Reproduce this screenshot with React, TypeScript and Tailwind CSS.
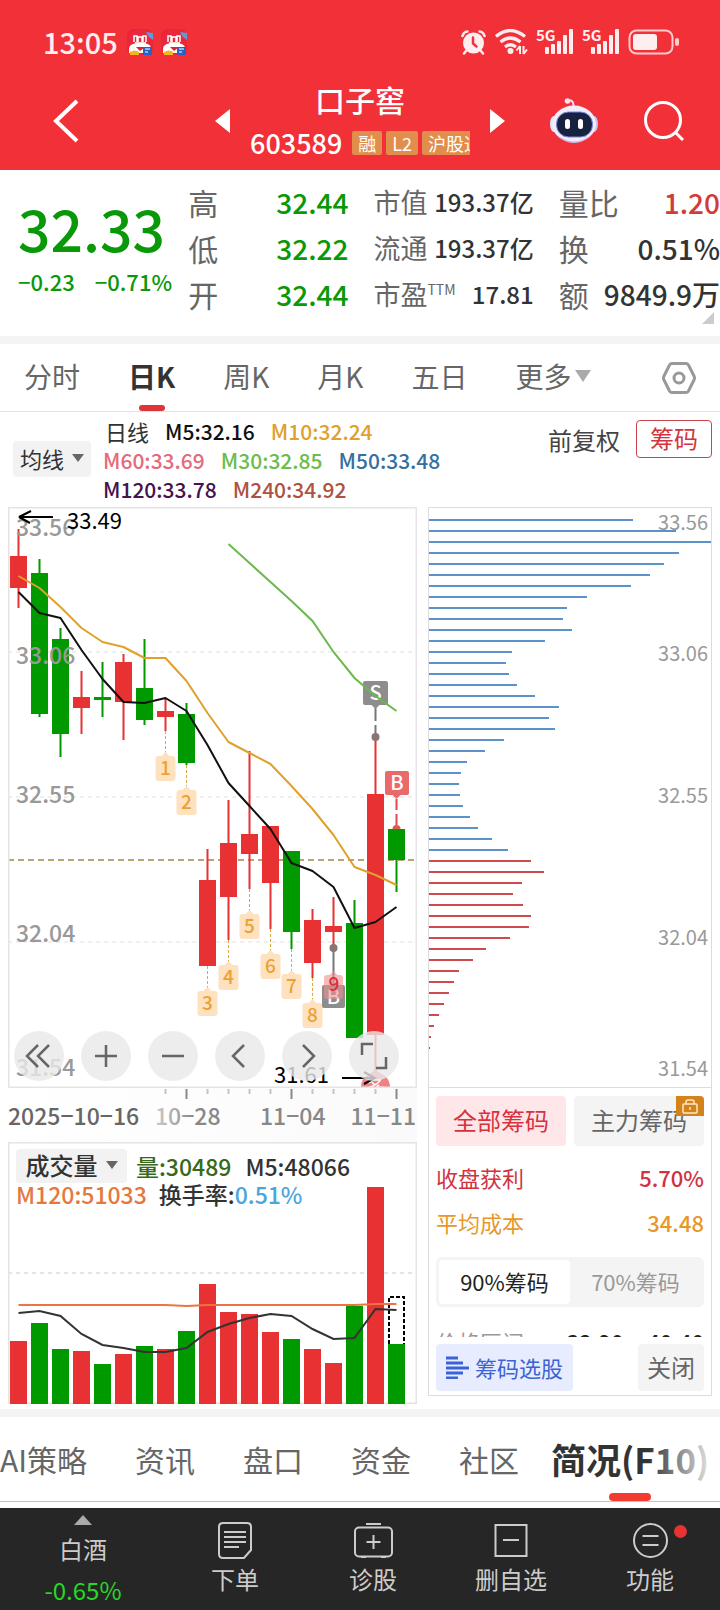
const RED = "#e73132";
const GREEN = "#009900";

// [up, high, body top, body bottom, low] in chart pixels
const candles: [boolean, number, number, number, number][] = [
  [true, 22, 49, 81, 101],
  [false, 52, 66, 207, 210],
  [false, 121, 132, 227, 250],
  [true, 164, 190, 201, 227],
  [false, 155, 190, 193, 210],
  [true, 147, 155, 195, 233],
  [false, 132, 181, 213, 218],
  [true, 192, 204, 210, 224],
  [false, 196, 207, 256, 258],
  [true, 342, 373, 459, 459],
  [true, 293, 336, 390, 433],
  [true, 244, 327, 347, 382],
  [true, 319, 319, 376, 422],
  [false, 344, 344, 425, 442],
  [true, 402, 413, 456, 471],
  [true, 390, 419, 425, 441],
  [false, 393, 416, 531, 531],
  [true, 230, 287, 528, 565],
  [false, 322, 322, 353, 385],
];

const ma5 = [85, 106, 111, 143, 172, 195, 196, 191, 204, 238, 276, 299, 322, 356, 364, 380, 421, 415, 400];
const ma10 = [69, 81, 100, 121, 135, 140, 151, 151, 174, 206, 235, 246, 257, 279, 302, 328, 360, 368, 378];
const ma30 = [37, 56, 75, 94, 114, 145, 171, 189, 204];

const volumeTops = [199, 181, 207, 209, 222, 212, 204, 207, 189, 142, 170, 172, 190, 197, 207, 221, 164, 45, 202];
const volumeMa5 = [171, 169, 174, 192, 203, 206, 210, 210, 206, 190, 182, 176, 172, 174, 187, 197, 196, 167, 168];
const volumeMa120 = [163, 163, 163, 163, 163, 163, 163, 163, 164, 163, 163, 163, 163, 163, 163, 163, 163, 162, 162];

const chips = [
  204, 247, 282, 250, 235, 221, 202, 158, 138, 134, 143, 116, 83, 77, 80, 88, 106, 130, 120, 126, 75, 56, 38, 32, 30,
  31, 34, 41, 49, 63, 79, 102, 115, 93, 84, 94, 102, 100, 81, 57, 44, 30, 25, 20, 15, 10, 5, 2, 1,
];
const FIRST_PROFIT_CHIP = 31;

const cx = (i: number) => 10.5 + i * 21;
const points = (ys: number[], start = 0) => ys.map((y, i) => `${cx(i + start)},${y}`).join(" ");

function StickerIcon() {
  return (
    <svg viewBox="0 0 28 28" className="h-7 w-7">
      <rect x="1" y="1" width="26" height="26" rx="7" fill="#f0222c" />
      <path d="M1 18q-1-14 10-17h8q9 4 8 16z" fill="#e8283f" />
      <path d="M20 4l7 1v7l-4-3z" fill="#5f9bd8" />
      <path d="M8 14V8h3v6M12 14V9h4v5M17 14V8h3v6" fill="none" stroke="#fff" strokeWidth="1.500" />
      <path d="M9 14h11v4H9z" fill="#f7d9c4" />
      <path d="M3 20q1-5 11-5 11 0 11 5v5H3z" fill="#fff" />
      <path d="M10 19l4 4 5-4z" fill="#d9252b" />
      <path d="M4 24q5-3 9 0v3H4z" fill="#f6b51d" />
      <rect x="17" y="19" width="9" height="8" fill="#2a62c4" />
      <path d="M19 21h5M19 24h3" stroke="#fff" strokeWidth="1" />
    </svg>
  );
}

function AlarmIcon() {
  return (
    <svg viewBox="0 0 25 25" className="h-[25px] w-[25px]" fill="none" stroke="#ffeef0" strokeLinecap="round">
      <circle cx="12.500" cy="13" r="10.500" fill="#ffeef0" stroke="none" />
      <path d="M1.500 6q1-4 5-4.500M23.500 6q-1-4-5-4.500M5 21l-2 2.500M20 21l2 2.500" strokeWidth="2.500" />
      <path d="M12 7.500v6l3.500 3" stroke="#f23038" strokeWidth="2.500" />
    </svg>
  );
}

function WifiIcon() {
  return (
    <svg viewBox="0 0 34 26" className="h-[26px] w-[34px]" fill="none" stroke="#ffeef0" strokeWidth="3.200">
      <path d="M2 7.500q14-12 29 0M6.500 13q10-8 20 0M11 18q5.500-4.500 11 0" />
      <circle cx="16.500" cy="22" r="3" fill="#ffeef0" stroke="none" />
      <path d="M26 17v8M22.500 21.500l3.500-4.500M29.500 17v8M33 20.500l-3.500 4.500" strokeWidth="2" />
    </svg>
  );
}

function SignalIcon() {
  return (
    <svg viewBox="0 0 38 26" className="h-[26px] w-[38px] overflow-visible" fill="#ffeef0">
      <text x="0" y="12" fontSize="15" fontWeight="700">
        5G
      </text>
      <rect x="9" y="18" width="4" height="7" rx="1" />
      <rect x="15" y="15" width="4" height="10" rx="1" />
      <rect x="21" y="12" width="4" height="13" rx="1" />
      <rect x="27" y="6" width="4" height="19" rx="1" />
      <rect x="33" y="0" width="4" height="25" rx="1" />
    </svg>
  );
}

function BatteryIcon() {
  return (
    <svg viewBox="0 0 52 26" className="h-[26px] w-[52px]">
      <rect x="1.500" y="1.500" width="43" height="23" rx="7" fill="none" stroke="#ffc9cd" strokeWidth="2" />
      <rect x="5" y="5" width="24" height="16" rx="3" fill="#ffeef0" />
      <rect x="47" y="9" width="4" height="8" rx="2" fill="#ffc9cd" />
    </svg>
  );
}

function RobotIcon() {
  return (
    <svg viewBox="0 0 48 46" className="h-[46px] w-12">
      <path d="M23 10q2-6-3-8" fill="none" stroke="#f3dcf0" strokeWidth="2" />
      <circle cx="17.500" cy="3" r="2.800" fill="#fbe3ec" />
      <ellipse cx="4" cy="26" rx="4" ry="8" fill="#dfe3fb" />
      <ellipse cx="44" cy="26" rx="4" ry="8" fill="#c9c2f5" />
      <ellipse cx="24" cy="26" rx="22" ry="18.500" fill="#f0eefd" />
      <path d="M6 36q18 15 36 0-8 9-18 9T6 36z" fill="#c9b6ee" />
      <rect x="6.500" y="14" width="36" height="25" rx="12" fill="#17223f" stroke="#7d86dd" strokeWidth="1" />
      <rect x="15" y="21" width="5" height="10" rx="2.500" fill="#fff" />
      <rect x="28" y="21" width="5" height="10" rx="2.500" fill="#fff" />
    </svg>
  );
}

function Header() {
  return (
    <header className="bg-[#f23038] text-white">
      <div className="flex h-14 items-end justify-between pr-10 pl-[43px]">
        <div className="flex h-7 items-center gap-[6px]">
          <span className="mr-[2px] pb-[2px] text-[29px] leading-7 font-medium text-[#ffeef0]">13:05</span>
          <StickerIcon />
          <StickerIcon />
        </div>
        <div className="flex h-7 items-center gap-2">
          <AlarmIcon />
          <WifiIcon />
          <SignalIcon />
          <SignalIcon />
          <BatteryIcon />
        </div>
      </div>
      <div className="mt-4 grid h-[98px] grid-cols-[200fr_320fr_200fr] items-center">
        <button aria-label="返回" className="ml-[53px] w-fit">
          <svg viewBox="0 0 26 44" className="h-11 w-[26px]" fill="none" stroke="#fff" strokeWidth="4">
            <path d="M24 2L3 22l21 20" />
          </svg>
        </button>
        <div className="flex items-center justify-between px-[15px]">
          <button aria-label="上一只">
            <svg viewBox="0 0 15 24" className="h-6 w-[15px]" fill="#fff">
              <path d="M15 0v24L0 12z" />
            </svg>
          </button>
          <div className="w-[220px]">
            <h1 className="-mt-1 text-center text-[30px] leading-9 font-medium">口子窖</h1>
            <div className="mt-3 flex h-7 items-center gap-1 overflow-hidden whitespace-nowrap">
              <span className="mr-[6px] text-[27px] leading-7 font-medium">603589</span>
              <span className="rounded-xs bg-[#e18d4c] px-[6px] text-lg leading-6">融</span>
              <span className="rounded-xs bg-[#e18d4c] px-[6px] text-lg leading-6">L2</span>
              <span className="rounded-xs bg-[#e18d4c] px-[6px] text-lg leading-6">沪股通</span>
            </div>
          </div>
          <button aria-label="下一只">
            <svg viewBox="0 0 15 24" className="h-6 w-[15px]" fill="#fff">
              <path d="M0 0v24l15-12z" />
            </svg>
          </button>
        </div>
        <div className="flex items-center gap-[46px] pl-[30px]">
          <button aria-label="智能助手">
            <RobotIcon />
          </button>
          <button aria-label="搜索">
            <svg viewBox="0 0 40 40" className="h-10 w-10" fill="none" stroke="#fff" strokeWidth="3">
              <circle cx="19" cy="19" r="17.500" />
              <path d="M31 31l8 8" />
            </svg>
          </button>
        </div>
      </div>
    </header>
  );
}

function Stat({ label, value, sup, tone }: { label: string; value: string; sup?: string; tone: string }) {
  return (
    <div className="flex h-[46px] items-center justify-between whitespace-nowrap">
      <dt className="flex text-[#666]">
        {label}
        {sup && <sup className="top-0 mt-2 text-sm leading-none">{sup}</sup>}
      </dt>
      <dd className={tone}>{value}</dd>
    </div>
  );
}

function Quote() {
  return (
    <section className="relative grid grid-cols-[145fr_160fr_160fr_161fr] gap-x-[25px] border-b-8 border-[#f4f4f4] pt-[9px] pb-[19px] pl-[18px]">
      <div className="min-w-0 pt-5 font-medium whitespace-nowrap text-[#089808]">
        <p className="text-[57px] leading-[56px]">32.33</p>
        <p className="mt-3 flex gap-5 text-[22px] leading-7">
          <span>−0.23</span>
          <span>−0.71%</span>
        </p>
      </div>
      <dl className="text-[30px]">
        <Stat label="高" value="32.44" tone="text-[28px] font-medium text-[#089808]" />
        <Stat label="低" value="32.22" tone="text-[28px] font-medium text-[#089808]" />
        <Stat label="开" value="32.44" tone="text-[28px] font-medium text-[#089808]" />
      </dl>
      <dl className="text-[27px]">
        <Stat label="市值" value="193.37亿" tone="text-2xl font-medium text-[#333]" />
        <Stat label="流通" value="193.37亿" tone="text-2xl font-medium text-[#333]" />
        <Stat label="市盈" sup="TTM" value="17.81" tone="text-2xl font-medium text-[#333]" />
      </dl>
      <dl className="text-[30px]">
        <Stat label="量比" value="1.20" tone="text-[28px] font-medium text-[#d33a3a]" />
        <Stat label="换" value="0.51%" tone="text-[28px] font-medium text-[#333]" />
        <Stat label="额" value="9849.9万" tone="text-[28px] font-medium text-[#333]" />
      </dl>
      <svg viewBox="0 0 12 12" className="absolute right-[6px] bottom-3 h-3 w-3" fill="#ccc">
        <path d="M12 0v12H0z" />
      </svg>
    </section>
  );
}

function PeriodTabs() {
  const periods = ["分时", "日K", "周K", "月K", "五日"];
  return (
    <nav className="flex h-[68px] items-center gap-12 border-b border-[#e4e4e4] px-6 text-[28px] text-[#666]">
      {periods.map((period) =>
        period === "日K" ? (
          <button key={period} className="relative h-full pb-1 font-bold text-[#333]">
            {period}
            <span className="absolute bottom-0 left-1/2 h-[6px] w-[26px] -translate-x-1/2 rounded-full bg-[#dd3539]" />
          </button>
        ) : (
          <button key={period} className="h-full pb-1">
            {period}
          </button>
        ),
      )}
      <button className="flex h-full items-center gap-1 pb-1">
        更多
        <svg viewBox="0 0 16 12" className="h-3 w-4" fill="#aaa">
          <path d="M0 0h16L8 12z" />
        </svg>
      </button>
      <button aria-label="设置" className="ml-auto">
        <svg viewBox="0 0 34 32" className="h-8 w-[34px]" fill="none" stroke="#999" strokeWidth="3">
          <path d="M10 1.500h14q1.500 0 2.500 1.500l5.500 11q1 2 0 4l-5.500 11q-1 1.500-2.500 1.500H10q-1.500 0-2.500-1.500L2 18q-1-2 0-4L7.500 3Q8.500 1.500 10 1.500z" />
          <circle cx="17" cy="16" r="5" />
        </svg>
      </button>
    </nav>
  );
}

function Caret() {
  return (
    <svg viewBox="0 0 12 8" className="h-2 w-3" fill="#666">
      <path d="M0 0h12L6 8z" />
    </svg>
  );
}

function Legend() {
  return (
    <section className="flex items-start pr-2 pl-[13px]">
      <button className="mt-[29px] flex h-9 w-[78px] shrink-0 items-center justify-center gap-2 rounded-sm bg-[#f2f2f2] pb-[2px] text-[22px] text-[#333]">
        均线
        <Caret />
      </button>
      <div className="mt-[5px] ml-3 pb-[3px] text-[21px] leading-[29px] font-medium whitespace-nowrap">
        <p className="flex gap-4">
          <span className="ml-[2px] text-[22px] font-normal text-[#333]">日线</span>
          <span className="text-[#111]">M5:32.16</span>
          <span className="text-[#e0a02c]">M10:32.24</span>
        </p>
        <p className="flex gap-4">
          <span className="text-[#e46a7c]">M60:33.69</span>
          <span className="text-[#6cbd4c]">M30:32.85</span>
          <span className="text-[#35709f]">M50:33.48</span>
        </p>
        <p className="flex gap-4">
          <span className="text-[#45114f]">M120:33.78</span>
          <span className="text-[#ae523f]">M240:34.92</span>
        </p>
      </div>
      <div className="mt-2 ml-auto flex items-end gap-4 text-2xl">
        <button className="pb-[2px] leading-8 text-[#444]">前复权</button>
        <button className="h-[38px] w-[76px] rounded-sm border border-[#c8434b] pb-[2px] leading-8 text-[#d6323e]">筹码</button>
      </div>
    </section>
  );
}

function PriceChart() {
  return (
    <svg viewBox="0 0 409 581" className="block h-auto w-full">
      <clipPath id="plot">
        <rect width="409" height="580" />
      </clipPath>
      {[145, 290, 435].map((y) => (
        <path key={y} d={`M0 ${y}H409`} stroke="#e0e0e0" strokeDasharray="4 4" />
      ))}
      <path d="M0 353H409" stroke="#b9a276" strokeWidth="2" strokeDasharray="6 4" />
      {candles.map(([up, high, top, bottom, low], i) => (
        <g key={i} fill={up ? RED : GREEN}>
          <rect x={cx(i) - 1} y={high} width="2" height={low - high} />
          <rect x={cx(i) - 8.5} y={top} width="17" height={bottom - top} />
        </g>
      ))}
      <g fill="none" strokeWidth="2" strokeLinejoin="round">
        <polyline points={points(ma10)} stroke="#dfa12c" />
        <polyline points={points(ma5)} stroke="#111" />
      </g>

      {/* nine-count marks hang 25px under each low */}
      {[1, 2, 3, 4, 5, 6, 7, 8].map((n) => {
        const x = cx(n + 6);
        const low = candles[n + 6][4];
        return (
          <g key={n}>
            <path d={`M${x} ${low}v22`} stroke="#d9a93f" strokeDasharray="3 2" />
            <path d={`M${x - 4} ${low + 25}l4-4 4 4z`} fill="#fee2bf" />
            <rect x={x - 10} y={low + 25} width="20" height="25" rx="3" fill="#fee2bf" />
            <text x={x} y={low + 44} fontSize="19" fontWeight="500" textAnchor="middle" fill="#eba133">
              {n}
            </text>
          </g>
        );
      })}

      {/* trade points */}
      <g textAnchor="middle" fontSize="20" fontWeight="500">
        <path d="M325.500 441v37" stroke="#777" strokeWidth="2" />
        <circle cx="325.500" cy="441" r="4" fill="#8a7474" />
        <rect x="314" y="478" width="23" height="23" rx="2" fill="#8d8d8d" />
        <text x="325.500" y="497" fill="#fff">
          B
        </text>
        <path d="M321.500 468l4-4 4 4z" fill="#ef8f93" fillOpacity="0.6" />
        <rect x="316" y="468" width="19" height="24" rx="3" fill="#ef8f93" fillOpacity="0.6" />
        <text x="326" y="484" fontSize="19" fill="#dc2f38">
          9
        </text>

        <path d="M367.500 201v30" stroke="#777" strokeWidth="2" strokeDasharray="13 4" />
        <circle cx="367.500" cy="230" r="4" fill="#8a7474" />
        <path d="M363.500 198h8l-4 4z" fill="#8d8d8d" />
        <rect x="355" y="174" width="25" height="24" rx="2" fill="#8d8d8d" />
        <text x="367.500" y="193" fill="#fff">
          S
        </text>

        <path d="M388.500 292v26" stroke="#e4474a" strokeWidth="2" strokeDasharray="11 4" />
        <path d="M384.500 322a4 4 0 018 0z" fill="#dc5a5a" />
        <path d="M384.500 288h8l-4 4z" fill="#ea6a6a" />
        <rect x="377" y="264" width="24" height="24" rx="2" fill="#ea6a6a" />
        <text x="389" y="283" fill="#fff">
          B
        </text>
      </g>
      <polyline points={points(ma30, 10)} fill="none" stroke="#6cb84c" strokeWidth="2" />

      <g clipPath="url(#plot)">
        <path d="M361 568l6-6 7 6z" fill="#ef8085" />
        <circle cx="367.500" cy="580" r="14.500" fill="#ef8085" />
        <text x="367.500" y="588" fontSize="20" textAnchor="middle" fill="#fff">
          多
        </text>
      </g>

      <g fontSize="23" fontWeight="500" fill="#999">
        <text x="8" y="29">33.56</text>
        <text x="8" y="157">33.06</text>
        <text x="8" y="296">32.55</text>
        <text x="8" y="435">32.04</text>
        <text x="8" y="569">31.54</text>
      </g>
      <g fill="none" stroke="#000" strokeWidth="2">
        <path d="M45 10H11l12-6M11 10l11 6" />
        <path d="M334 571h33M356 577l11-6-11-6" />
      </g>
      <g fontSize="22">
        <text x="59" y="22">33.49</text>
        <text x="266" y="576">31.61</text>
      </g>
      <rect x="0.500" y="0.500" width="408" height="580" fill="none" stroke="#e4e4e4" strokeWidth="2" />
    </svg>
  );
}

function ChartControls() {
  const controls = [
    { label: "最早", path: "M24 14L13 25l11 11M35 14L24 25l11 11" },
    { label: "放大", path: "M25 14v22M14 25h22" },
    { label: "缩小", path: "M14 25h22" },
    { label: "左移", path: "M29 14L18 25l11 11" },
    { label: "右移", path: "M21 14l11 11-11 11" },
    { label: "全屏", path: "M13 24V13h11M37 26v11H27" },
  ];
  return (
    <div className="absolute bottom-[7px] left-[6px] flex gap-[17px]">
      {controls.map((control) => (
        <button key={control.label} aria-label={control.label} className="h-[50px] w-[50px] rounded-full bg-[#e8e8e8]/80">
          <svg viewBox="0 0 50 50" fill="none" stroke="#666" strokeWidth="2.500">
            <path d={control.path} />
          </svg>
        </button>
      ))}
    </div>
  );
}

function DateAxis() {
  return (
    <svg viewBox="0 0 409 54" className="block h-auto w-full bg-linear-to-r from-white to-[#fafafa]">
      <defs>
        <linearGradient id="fade">
          <stop offset="0" stopColor="#ccc" />
          <stop offset="0.600" stopColor="#888" />
        </linearGradient>
      </defs>
      {candles.map((_, i) => {
        if (i < 7) return null;
        const major = i % 5 === 3;
        return (
          <path key={i} d={`M${cx(i)} 1v${major ? 10 : 5}`} stroke={major ? "#888" : "#c4c4c4"} strokeWidth="2" />
        );
      })}
      <g fontSize="24" fontWeight="500" fill="#888">
        <text x="0" y="37" fill="#666" fontSize="23">
          2025−10−16
        </text>
        <text x="147" y="37" fill="url(#fade)" fontSize="23">
          10−28
        </text>
        <text x="252" y="37" fontSize="23">
          11−04
        </text>
        <text x="408" y="37" fontSize="23" textAnchor="end">
          11−11
        </text>
      </g>
    </svg>
  );
}

function VolumeChart() {
  return (
    <div className="relative">
      <svg viewBox="0 0 409 262" className="block h-auto w-full">
        <rect x="0.500" y="0.500" width="408" height="261" fill="none" stroke="#e4e4e4" strokeWidth="2" />
        <path d="M0 131H409" stroke="#e4e4e4" strokeWidth="2" strokeDasharray="4 4" />
        {volumeTops.map((top, i) => (
          <rect key={i} x={cx(i) - 8.5} y={top} width="17" height={262 - top} fill={candles[i][0] ? RED : GREEN} />
        ))}
        <path d="M381 202V155h15v47" fill="none" stroke="#000" strokeWidth="2" strokeDasharray="4 2" />
        <polyline points={points(volumeMa120)} fill="none" stroke="#ee7340" strokeWidth="2" />
        <polyline points={points(volumeMa5)} fill="none" stroke="#333" strokeWidth="2" />
      </svg>
      <div className="absolute top-[7px] left-2 text-[23px] font-medium whitespace-nowrap">
        <div className="flex h-[34px] items-center gap-[14px]">
          <button className="-mr-[5px] flex h-full w-[111px] items-center justify-center gap-2 rounded-sm bg-[#f2f2f2] pb-[2px] text-2xl text-[#333]">
            成交量
            <Caret />
          </button>
          <span className="text-[#37691a]">量:30489</span>
          <span className="text-[#333]">M5:48066</span>
        </div>
        <p className="flex gap-3 leading-[22px]">
          <span className="text-[#e5773f]">M120:51033</span>
          <span className="text-[#333]">
            换手率:<span className="text-[#4aa6dc]">0.51%</span>
          </span>
        </p>
      </div>
    </div>
  );
}

function ChipPanel() {
  return (
    <div className="border border-[#dcdcdc]">
      <svg viewBox="0 0 282 579" className="block h-auto w-full border-b border-[#dcdcdc]">
        {chips.map((length, i) => (
          <path key={i} d={`M0 ${12 + i * 11}h${length}`} stroke={i < FIRST_PROFIT_CHIP ? "#5b92cc" : "#cf4a4c"} strokeWidth="2" />
        ))}
        <g fontSize="20" fill="#999" textAnchor="end">
          <text x="279" y="22">33.56</text>
          <text x="279" y="153">33.06</text>
          <text x="279" y="295">32.55</text>
          <text x="279" y="437">32.04</text>
          <text x="279" y="568">31.54</text>
        </g>
      </svg>
      <div className="px-[7px] pt-2 pb-1 text-[22px]">
        <div className="grid grid-cols-2 gap-2 text-2xl">
          <button className="h-[50px] rounded-sm bg-[#fee6e9] pb-[2px] text-[#d8313f]">全部筹码</button>
          <button className="relative h-[50px] rounded-sm bg-[#f4f4f4] pb-[2px] text-[#666]">
            主力筹码
            <span className="absolute top-0 right-0 rounded-tr-sm bg-[#d4821a] px-[6px]">
              <svg viewBox="0 0 16 20" className="h-5 w-4" fill="none" stroke="#ffe9c4" strokeWidth="1.500">
                <rect x="1" y="8" width="14" height="9" rx="1" />
                <path d="M4 8V6q0-2 2-2h4q2 0 2 2v2M8 11v3" />
              </svg>
            </span>
          </button>
        </div>
        <dl>
          <div className="mt-[9px] flex h-[45px] items-center justify-between text-[#d0323f]">
            <dt>收盘获利</dt>
            <dd className="font-medium">5.70%</dd>
          </div>
          <div className="flex h-[45px] items-center justify-between text-[#e8982a]">
            <dt>平均成本</dt>
            <dd className="font-medium">34.48</dd>
          </div>
        </dl>
        <div className="mt-3 grid h-[50px] grid-cols-2 rounded-md bg-[#f4f4f4] p-[3px]">
          <button className="rounded-sm bg-white pb-[2px] text-[#222]">90%筹码</button>
          <button className="pb-[2px] text-[#999]">70%筹码</button>
        </div>
        <div className="mt-[21px] flex h-[9px] justify-between overflow-hidden leading-[26px]">
          <span className="text-[#999]">价格区间</span>
          <span className="flex gap-2 font-medium text-[#222]">
            <span>32.90</span>
            <span>-</span>
            <span>40.40</span>
          </span>
        </div>
        <div className="mt-[7px] flex justify-between">
          <button className="flex h-[47px] w-[137px] items-center justify-center gap-[6px] rounded-sm bg-[#e7edfe] text-[#3c63d6]">
            <svg viewBox="0 0 23 23" className="h-[23px] w-[23px]" stroke="#3c63d6" strokeWidth="3">
              <path d="M0 2h12M0 7h17M0 12h23M0 17h17M0 22h12" />
            </svg>
            筹码选股
          </button>
          <button className="h-[47px] w-[66px] rounded-sm bg-[#f4f4f4] pb-[2px] text-2xl text-[#666]">关闭</button>
        </div>
      </div>
    </div>
  );
}

function InfoTabs() {
  const tabs = ["AI策略", "资讯", "盘口", "资金", "社区"];
  return (
    <nav className="relative flex h-[85px] gap-12 overflow-hidden border-b border-[#c4c4c4] text-[30px] whitespace-nowrap text-[#666]">
      {tabs.map((tab) => (
        <button key={tab} className="shrink-0">
          {tab}
        </button>
      ))}
      <button className="relative -ml-4 shrink-0 text-[35px] font-bold text-[#333]">
        简况(F10)
        <span className="absolute bottom-0 left-1/2 h-2 w-[42px] -translate-x-1/2 rounded-full bg-[#f23c32]" />
      </button>
      <div className="pointer-events-none absolute top-0 right-0 h-[70px] w-[72px] bg-linear-to-r from-transparent to-white" />
    </nav>
  );
}

function DocIcon() {
  return (
    <svg viewBox="0 0 34 37" className="h-[37px] w-[34px]" fill="none" stroke="#ccc" strokeWidth="2">
      <path d="M5 1h24q4 0 4 4v23l-7 8H5q-4 0-4-4V5q0-4 4-4zM6 10h22M6 15h22M6 20h22M6 25h15" />
    </svg>
  );
}

function CaseIcon() {
  return (
    <svg viewBox="0 0 39 37" className="h-[37px] w-[39px]" fill="none" stroke="#ccc" strokeWidth="2">
      <path d="M12 2h15M19.500 13v14M12.500 20h14M7 35h5M27 35h5" />
      <rect x="1" y="5.500" width="37" height="29" rx="4" />
    </svg>
  );
}

function MinusIcon() {
  return (
    <svg viewBox="0 0 34 37" className="h-[37px] w-[34px]" fill="none" stroke="#ccc" strokeWidth="2">
      <path d="M1.500 3h31v31h-31zM9 18h16" />
    </svg>
  );
}

function MenuIcon() {
  return (
    <svg viewBox="0 0 35 37" className="h-[37px] w-[35px]" fill="none" stroke="#ccc" strokeWidth="2">
      <circle cx="17.500" cy="18.500" r="16.500" />
      <path d="M9.500 14h16M9.500 23h16" />
    </svg>
  );
}

function BottomBar() {
  const actions = [
    { label: "下单", icon: <DocIcon /> },
    { label: "诊股", icon: <CaseIcon /> },
    { label: "删自选", icon: <MinusIcon /> },
    { label: "功能", icon: <MenuIcon />, badge: true },
  ];
  return (
    <footer className="mt-[6px] grid h-[102px] grid-cols-[166fr_138fr_138fr_138fr_140fr] bg-[#262626] text-2xl text-[#ccc]">
      <button className="flex flex-col items-center pt-[7px]">
        <svg viewBox="0 0 18 10" className="h-[10px] w-[18px]" fill="#aaa">
          <path d="M9 0l9 10H0z" />
        </svg>
        <span className="mt-2 leading-8">白酒</span>
        <span className="mt-[9px] leading-8 text-[#2ad62a]">-0.65%</span>
      </button>
      {actions.map((action) => (
        <button key={action.label} className="flex flex-col items-center pt-[14px]">
          <span className="relative">
            {action.icon}
            {action.badge && <span className="absolute top-[3px] -right-[19px] h-[13px] w-[13px] rounded-full bg-[#ea3234]" />}
          </span>
          <span className="mt-1 leading-8">{action.label}</span>
        </button>
      ))}
    </footer>
  );
}

export default function App() {
  return (
    <div className="bg-white font-['Noto_Sans_CJK_SC',sans-serif]">
      <Header />
      <Quote />
      <PeriodTabs />
      <Legend />
      <main className="grid grid-cols-[409fr_284fr] items-start gap-[11px] px-2">
        <div>
          <div className="relative">
            <PriceChart />
            <ChartControls />
          </div>
          <DateAxis />
          <VolumeChart />
        </div>
        <ChipPanel />
      </main>
      <div className="mt-[5px] h-2 bg-[#f4f4f4]" />
      <InfoTabs />
      <BottomBar />
    </div>
  );
}
